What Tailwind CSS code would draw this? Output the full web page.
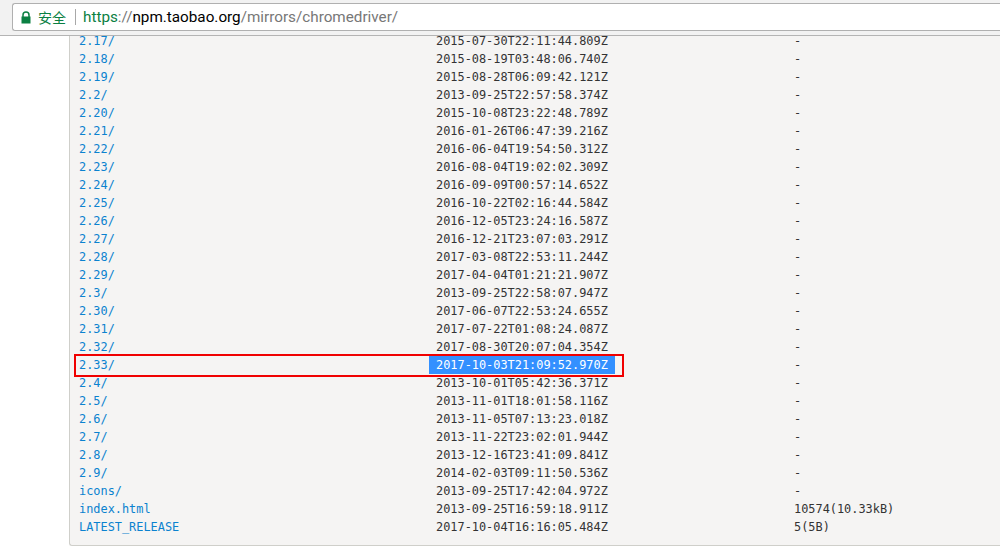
<!DOCTYPE html>
<html lang="en">
<head>
    <meta charset="UTF-8">
    <meta name="viewport" content="width=device-width, initial-scale=1.0">
    <title>chromedriver mirror</title>
    <script src="https://cdn.jsdelivr.net/npm/@tailwindcss/browser@4"></script>
</head>
<body class="bg-white h-[557px] w-[1000px] overflow-hidden">
    <!-- browser toolbar -->
    <div class="relative z-10 h-9 bg-[#f2f2f2] border-b border-[#b4b4b4] pt-[3px] pl-3">
        <div class="h-[28px] bg-white border border-[#b0b0b0] border-r-0 rounded-l-[3px] flex items-center pl-[8px] text-[15.25px] font-['Roboto','Noto_Sans_CJK_SC',sans-serif]">
            <svg class="w-[10px] h-[13px]" viewBox="0 0 10 13"><path d="M2 6V4a3 3 0 0 1 6 0v2" fill="none" stroke="#0b8043" stroke-width="1.5"/><rect x="0.5" y="5.5" width="9" height="7" fill="#0b8043"/></svg>
            <span class="ml-[7px] text-[14px] text-[#0b8043] font-['Noto_Sans_CJK_SC',sans-serif]">安全</span>
            <span class="ml-[9px] w-px h-[16px] bg-[#a8a8a8]"></span>
            <span class="ml-[7px]"><span class="text-[#0b8043]">https</span><span class="text-[#777]">://</span><span class="text-black">npm.taobao.org</span><span class="text-[#777]">/mirrors/chromedriver/</span></span>
        </div>
    </div>

    <div class="relative">
        <div class="ml-[69px] h-[510px] bg-[#f5f4f3] border-l border-b border-[#cfcfca] rounded-bl-[3px] pl-[9px] font-['DejaVu_Sans_Mono','Liberation_Mono',monospace] text-[11.9px] leading-[18px] text-[#333]">
            <div class="grid grid-cols-[357px_358px_1fr]" id="rows">
                <!-- first row is scrolled partly under the toolbar -->
                <a class="text-[#0b82cf] leading-[10px] pb-1">2.17/</a><span class="leading-[10px] pb-1">2015-07-30T22:11:44.809Z</span><span class="leading-[10px] pb-1">-</span>
                <a class="text-[#0b82cf]">2.18/</a><span>2015-08-19T03:48:06.740Z</span><span>-</span>
                <a class="text-[#0b82cf]">2.19/</a><span>2015-08-28T06:09:42.121Z</span><span>-</span>
                <a class="text-[#0b82cf]">2.2/</a><span>2013-09-25T22:57:58.374Z</span><span>-</span>
                <a class="text-[#0b82cf]">2.20/</a><span>2015-10-08T23:22:48.789Z</span><span>-</span>
                <a class="text-[#0b82cf]">2.21/</a><span>2016-01-26T06:47:39.216Z</span><span>-</span>
                <a class="text-[#0b82cf]">2.22/</a><span>2016-06-04T19:54:50.312Z</span><span>-</span>
                <a class="text-[#0b82cf]">2.23/</a><span>2016-08-04T19:02:02.309Z</span><span>-</span>
                <a class="text-[#0b82cf]">2.24/</a><span>2016-09-09T00:57:14.652Z</span><span>-</span>
                <a class="text-[#0b82cf]">2.25/</a><span>2016-10-22T02:16:44.584Z</span><span>-</span>
                <a class="text-[#0b82cf]">2.26/</a><span>2016-12-05T23:24:16.587Z</span><span>-</span>
                <a class="text-[#0b82cf]">2.27/</a><span>2016-12-21T23:07:03.291Z</span><span>-</span>
                <a class="text-[#0b82cf]">2.28/</a><span>2017-03-08T22:53:11.244Z</span><span>-</span>
                <a class="text-[#0b82cf]">2.29/</a><span>2017-04-04T01:21:21.907Z</span><span>-</span>
                <a class="text-[#0b82cf]">2.3/</a><span>2013-09-25T22:58:07.947Z</span><span>-</span>
                <a class="text-[#0b82cf]">2.30/</a><span>2017-06-07T22:53:24.655Z</span><span>-</span>
                <a class="text-[#0b82cf]">2.31/</a><span>2017-07-22T01:08:24.087Z</span><span>-</span>
                <a class="text-[#0b82cf]">2.32/</a><span>2017-08-30T20:07:04.354Z</span><span>-</span>
                <a class="text-[#0b82cf]">2.33/</a><span><span class="inline-block -ml-[7px] px-[7px] bg-[#3390ff] text-white">2017-10-03T21:09:52.970Z</span></span><span>-</span>
                <a class="text-[#0b82cf]">2.4/</a><span>2013-10-01T05:42:36.371Z</span><span>-</span>
                <a class="text-[#0b82cf]">2.5/</a><span>2013-11-01T18:01:58.116Z</span><span>-</span>
                <a class="text-[#0b82cf]">2.6/</a><span>2013-11-05T07:13:23.018Z</span><span>-</span>
                <a class="text-[#0b82cf]">2.7/</a><span>2013-11-22T23:02:01.944Z</span><span>-</span>
                <a class="text-[#0b82cf]">2.8/</a><span>2013-12-16T23:41:09.841Z</span><span>-</span>
                <a class="text-[#0b82cf]">2.9/</a><span>2014-02-03T09:11:50.536Z</span><span>-</span>
                <a class="text-[#0b82cf]">icons/</a><span>2013-09-25T17:42:04.972Z</span><span>-</span>
                <a class="text-[#0b82cf]">index.html</a><span>2013-09-25T16:59:18.911Z</span><span>10574(10.33kB)</span>
                <a class="text-[#0b82cf]">LATEST_RELEASE</a><span>2017-10-04T16:16:05.484Z</span><span>5(5B)</span>
            </div>
        </div>
        <!-- red annotation box -->
        <div class="absolute left-[74px] top-[318px] w-[550px] h-[23px] border-2 border-[#f00000]"></div>
    </div>
</body>
</html>
